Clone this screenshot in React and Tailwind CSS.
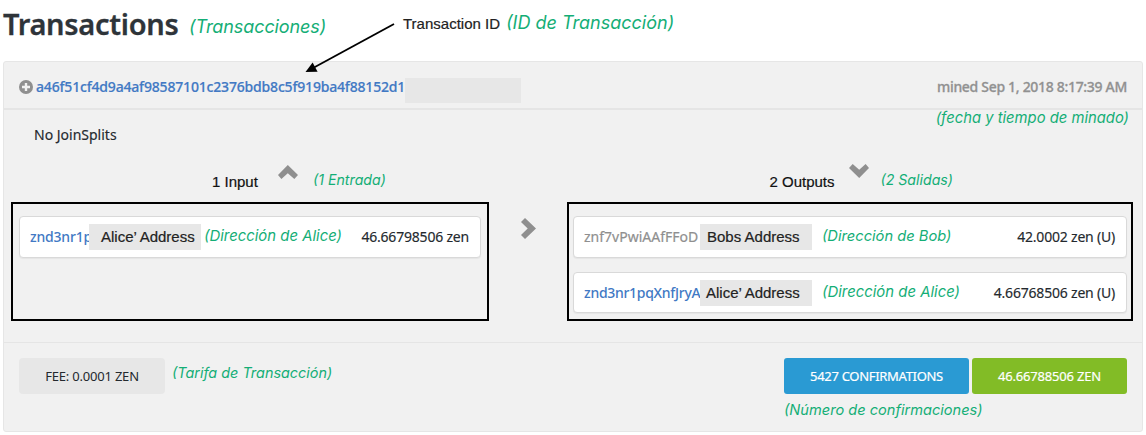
import React from 'react';

function Note({ className, children }) {
  return (
    <span className={`block shrink-0 whitespace-nowrap italic leading-5 text-[#14ae76] font-['Inter',sans-serif] ${className}`}>
      {children}
    </span>
  );
}

function Label({ className, children }) {
  return (
    <span className={`block shrink-0 whitespace-nowrap text-[15px] leading-5 [-webkit-text-stroke:0.2px_currentColor] font-['Liberation_Sans',Arial,sans-serif] ${className}`}>
      {children}
    </span>
  );
}

function Chevron({ className, points, w, h }) {
  return (
    <svg className={`block shrink-0 ${className}`} width={w} height={h} viewBox={`0 0 ${w} ${h}`}>
      <polygon points={points} fill="#8f8f8f" />
    </svg>
  );
}

function AddressRow({ className, address, addressClass, label, labelClass, note, noteClass, amount }) {
  return (
    <div className={`flex items-start rounded-[4px] border border-[#d9d9d9] bg-white shadow-[0_1px_1px_rgba(0,0,0,0.05)] ${className}`}>
      <span className={`mt-[10px] ml-[10px] block shrink-0 whitespace-nowrap leading-5 ${addressClass}`}>{address}</span>
      <div className="mt-[7px] h-[26px] w-[112px] shrink-0 bg-[#e7e7e7]">
        <Label className={`mt-[3px] text-[#222] ${labelClass}`}>{label}</Label>
      </div>
      <Note className={noteClass}>{note}</Note>
      <span className="mt-[10px] ml-auto mr-[11px] whitespace-nowrap tracking-[-0.2px] leading-5 [-webkit-text-stroke:0.15px_currentColor]">{amount}</span>
    </div>
  );
}

export default function App() {
  return (
    <div className="relative h-[435px] w-[1146px] overflow-hidden bg-white text-[14px] text-[#24292e] font-['Noto_Sans',sans-serif]">
      <header className="flex h-[61px] items-start pl-[3px]">
        <h1 className="mt-[4px] w-[186px] whitespace-nowrap text-[29px] font-semibold leading-10 tracking-[-0.3px] text-[#2e3439] [-webkit-text-stroke:0.3px_currentColor]">Transactions</h1>
        <Note className="mt-[17px] w-[214px] text-[18px] tracking-[-0.1px]">(Transacciones)</Note>
        <Label className="mt-[14px] w-[103px] text-[#222]">Transaction ID</Label>
        <Note className="mt-[13px] text-[18px]">(ID de Transacción)</Note>
      </header>

      <section className="ml-[3px] flex h-[371px] w-[1140px] flex-col rounded-[3px] border border-[#e6e6e6] bg-[#f1f1f1]">
        <div className="flex h-[48px] shrink-0 items-start border-b-2 border-[#e5e5e5] pl-[15px]">
          <svg className="mt-[18px] shrink-0" width="14" height="14" viewBox="0 0 14 14">
            <circle cx="7" cy="7" r="7" fill="#8f8f8f" />
            <path d="M7 3v8M3 7h8" stroke="#f1f1f1" strokeWidth="2.4" />
          </svg>
          <a className="mt-[15px] ml-[3px] w-[369px] shrink-0 whitespace-nowrap font-medium leading-5 tracking-[-0.18px] text-[#4179c4] [-webkit-text-stroke:0.2px_currentColor]">a46f51cf4d9a4af98587101c2376bdb8c5f919ba4f88152d1</a>
          <div className="mt-[16px] h-[25px] w-[116px] bg-[#e7e7e7]" />
          <span className="mt-[15px] mr-[15px] ml-auto whitespace-nowrap font-medium leading-5 tracking-[-0.31px] text-[#919191] [-webkit-text-stroke:0.3px_currentColor]">mined Sep 1, 2018 8:17:39 AM</span>
        </div>

        <div className="flex h-[60px] shrink-0 items-start justify-between pl-[30px] pr-[13px]">
          <span className="mt-[15px] leading-5 [-webkit-text-stroke:0.15px_currentColor]">No JoinSplits</span>
          <Note className="mt-[-2px] text-[14.8px]">(fecha y tiempo de minado)</Note>
        </div>

        <div className="flex h-[32px] shrink-0 items-start">
          <Label className="mt-[2px] ml-[208px] w-[66px] text-[#111]">1 Input</Label>
          <Chevron className="mt-[-5px]" w={20} h={14} points="9.8,0 20,10 16.3,14 9.8,8.2 3.4,14 0,10" />
          <Note className="ml-[15px] text-[14.2px]">(1 Entrada)</Note>
          <Label className="mt-[2px] ml-auto w-[80px] text-[#111]">2 Outputs</Label>
          <Chevron className="mt-[-6px]" w={20} h={14} points="10.2,14 0,4 3.7,0 10.2,5.8 16.6,0 20,4" />
          <Note className="mr-[189px] ml-[11px] text-[14.2px]">(2 Salidas)</Note>
        </div>

        <div className="flex h-[119px] shrink-0 items-start pl-[7px]">
          <div className="h-[119px] w-[478px] shrink-0 border-2 border-black px-[6px] pt-[12px]">
            <AddressRow
              className="h-[42px] w-[462px]"
              address="znd3nr1p"
              addressClass="w-[59px] font-medium text-[#4179c4] tracking-[-0.2px]"
              label="Alice’ Address"
              labelClass="ml-[12px]"
              note="(Dirección de Alice)"
              noteClass="mt-[9px] ml-[3px] text-[14.9px]"
              amount="46.66798506 zen"
            />
          </div>
          <Chevron className="mt-[16px] ml-[32px]" w={15} h={21} points="4,0 15,10.4 4,21 0,17 6.7,10.4 0,4" />
          <div className="ml-[31px] flex h-[119px] w-[566px] shrink-0 flex-col gap-[14px] border-2 border-black px-[4px] pt-[12px]">
            <AddressRow
              className="h-[42px]"
              address="znf7vPwiAAfFFoD"
              addressClass="w-[116px] text-[#8f8f8f] [-webkit-text-stroke:0.2px_currentColor]"
              label="Bobs Address"
              labelClass="ml-[7px]"
              note="(Dirección de Bob)"
              noteClass="mt-[9px] ml-[10px] text-[14.7px]"
              amount="42.0002 zen (U)"
            />
            <AddressRow
              className="h-[41px]"
              address="znd3nr1pqXnfJryA"
              addressClass="w-[116px] font-medium text-[#4179c4] tracking-[-0.29px]"
              label="Alice’ Address"
              labelClass="ml-[6px]"
              note="(Dirección de Alice)"
              noteClass="mt-[9px] ml-[10px] text-[14.9px]"
              amount="4.66768506 zen (U)"
            />
          </div>
        </div>

        <div className="mt-[21px] flex flex-1 items-start border-t border-[#e5e5e5] pt-[15px] pr-[15px] pl-[15px]">
          <div className="h-[36px] w-[146px] rounded-[4px] bg-[#e7e7e7] text-center text-[13px] leading-9 tracking-[-0.2px]">FEE: 0.0001 ZEN</div>
          <Note className="mt-[5px] ml-[7px] text-[14.4px]">(Tarifa de Transacción)</Note>
          <div className="ml-auto w-[343px]">
            <div className="flex gap-[3px] text-center text-[13px] leading-9 text-white [-webkit-text-stroke:0.2px_currentColor]">
              <div className="h-[36px] w-[185px] rounded-[3px] bg-[#2a9ad3] tracking-[-0.3px]">5427 CONFIRMATIONS</div>
              <div className="h-[36px] w-[155px] rounded-[3px] bg-[#82bc26] tracking-[-0.2px]">46.66788506 ZEN</div>
            </div>
            <Note className="mt-[6px] text-[14.6px]">(Número de confirmaciones)</Note>
          </div>
        </div>
      </section>

      <svg className="absolute top-[20px] left-[300px]" width="100" height="56" viewBox="300 20 100 56">
        <path d="M394 24 314 67.5" stroke="#000" strokeWidth="1.9" />
        <polygon points="305.5,72 312.6,62.5 317.6,71.7" fill="#000" />
      </svg>
    </div>
  );
}
